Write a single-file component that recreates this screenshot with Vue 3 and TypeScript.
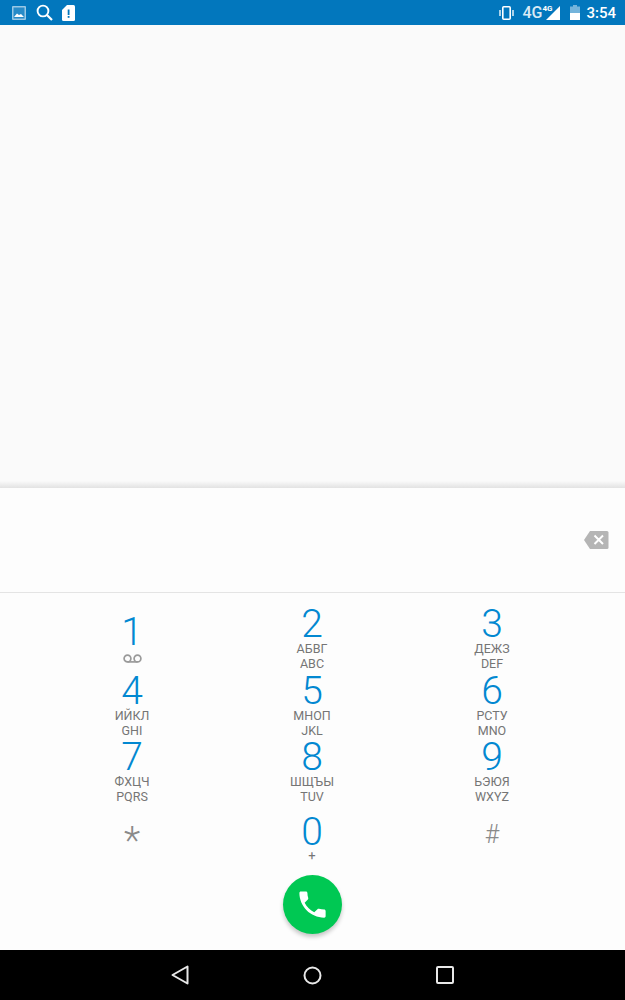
<script setup lang="ts">
interface DialKey {
  digit: string
  labels?: string[]
  symbol?: 'star' | 'hash'
  sub?: 'voicemail' | 'plus'
}

const keys: DialKey[] = [
  { digit: '1', sub: 'voicemail' },
  { digit: '2', labels: ['АБВГ', 'ABC'] },
  { digit: '3', labels: ['ДЕЖЗ', 'DEF'] },
  { digit: '4', labels: ['ИЙКЛ', 'GHI'] },
  { digit: '5', labels: ['МНОП', 'JKL'] },
  { digit: '6', labels: ['РСТУ', 'MNO'] },
  { digit: '7', labels: ['ФХЦЧ', 'PQRS'] },
  { digit: '8', labels: ['ШЩЪЫ', 'TUV'] },
  { digit: '9', labels: ['ЬЭЮЯ', 'WXYZ'] },
  { digit: '*', symbol: 'star' },
  { digit: '0', sub: 'plus' },
  { digit: '#', symbol: 'hash' },
]
</script>

<template>
  <div class="phone">
    <header class="status-bar">
      <div class="status-left">
        <svg class="pic" width="14" height="14" viewBox="0 0 14 14">
          <rect width="14" height="14" rx="1" fill="#fff" opacity="0.6" />
          <rect x="1.5" y="1.5" width="11" height="11" fill="#0277bd" opacity="0.75" />
          <path d="M2 11 L5 7.5 L7 9 L9 8 L12 11 Z" fill="#fff" />
        </svg>
        <svg width="17" height="17" viewBox="0 0 17 17">
          <circle cx="7" cy="7" r="5.4" fill="none" stroke="#fff" stroke-width="1.9" />
          <path d="M11 11 L16 16" stroke="#fff" stroke-width="2.2" />
        </svg>
        <svg class="sim" width="13" height="16" viewBox="0 0 13 16">
          <path d="M5 0 H11.5 A1.5 1.5 0 0 1 13 1.5 V14.5 A1.5 1.5 0 0 1 11.5 16 H1.5 A1.5 1.5 0 0 1 0 14.5 V5 Z" fill="#fff" />
          <rect x="5.7" y="4.5" width="1.8" height="5.5" fill="#0277bd" />
          <rect x="5.7" y="11" width="1.8" height="1.8" fill="#0277bd" />
        </svg>
      </div>
      <div class="status-right">
        <svg width="15" height="14" viewBox="0 0 15 14">
          <rect x="3.8" y="0.8" width="7.4" height="12.4" rx="1" fill="none" stroke="#fff" stroke-width="1.6" />
          <path d="M1 4 V10" stroke="#fff" stroke-width="1.8" opacity="0.75" />
          <path d="M14 4 V10" stroke="#fff" stroke-width="1.8" opacity="0.75" />
        </svg>
        <span class="net">4G</span>
        <div class="signal">
          <span class="net-small">4G</span>
          <svg width="15" height="14" viewBox="0 0 15 14">
            <path d="M14 0 V14 H0 Z" fill="#fff" />
          </svg>
        </div>
        <svg class="battery" width="10" height="15" viewBox="0 0 10 15">
          <path d="M3 0 H7 V1.5 H10 V15 H0 V1.5 H3 Z" fill="#fff" opacity="0.45" />
          <rect y="8" width="10" height="7" fill="#fff" />
        </svg>
        <span class="time">3:54</span>
      </div>
    </header>

    <main class="content"></main>

    <section class="number-field">
      <svg class="backspace" width="26" height="20" viewBox="0 0 26 20">
        <path d="M7 1 H24 A1.5 1.5 0 0 1 25.5 2.5 V17.5 A1.5 1.5 0 0 1 24 19 H7 L1 10 Z" fill="#b5b5b5" />
        <path d="M11.5 5.5 L20 14 M20 5.5 L11.5 14" stroke="#fff" stroke-width="2" />
      </svg>
    </section>

    <section class="dialpad">
      <div class="keys">
        <div v-for="key in keys" :key="key.digit" class="key">
          <div class="digit" :class="key.symbol">{{ key.digit }}</div>
          <template v-if="key.labels">
            <div v-for="label in key.labels" :key="label" class="label">{{ label }}</div>
          </template>
          <svg v-if="key.sub === 'voicemail'" class="voicemail" width="19" height="9" viewBox="0 0 19 9">
            <circle cx="4.5" cy="4.5" r="3.4" fill="none" stroke="#9a9a9a" stroke-width="1.7" />
            <circle cx="14.5" cy="4.5" r="3.4" fill="none" stroke="#9a9a9a" stroke-width="1.7" />
            <path d="M4.5 7.9 H14.5" stroke="#9a9a9a" stroke-width="1.7" />
          </svg>
          <div v-if="key.sub === 'plus'" class="plus">+</div>
        </div>
      </div>
      <button class="call">
        <svg width="35" height="35" viewBox="0 0 24 24">
          <path fill="#fff" d="M6.62 10.79c1.44 2.83 3.76 5.14 6.59 6.59l2.2-2.2c.27-.27.67-.36 1.02-.24 1.12.37 2.33.57 3.57.57.55 0 1 .45 1 1V20c0 .55-.45 1-1 1-9.39 0-17-7.61-17-17 0-.55.45-1 1-1h3.5c.55 0 1 .45 1 1 0 1.25.2 2.45.57 3.57.11.35.03.74-.25 1.02l-2.2 2.2z" />
        </svg>
      </button>
    </section>

    <nav class="nav-bar">
      <svg width="18" height="20" viewBox="0 0 18 20">
        <path d="M16.5 1.5 V18.5 L1.5 10 Z" fill="none" stroke="#e8e8e8" stroke-width="2" stroke-linejoin="round" />
      </svg>
      <svg width="19" height="19" viewBox="0 0 19 19">
        <circle cx="9.5" cy="9.5" r="8" fill="none" stroke="#e8e8e8" stroke-width="2" />
      </svg>
      <svg width="18" height="18" viewBox="0 0 18 18">
        <rect x="1" y="1" width="16" height="16" rx="1" fill="none" stroke="#e8e8e8" stroke-width="2" />
      </svg>
    </nav>
  </div>
</template>

<style>
body {
  background: #fafafa;
}
</style>

<style scoped>
.phone {
  display: flex;
  flex-direction: column;
  width: 625px;
  height: 1000px;
  overflow: hidden;
  font-family: Roboto, "Liberation Sans", sans-serif;
}

.status-bar {
  display: flex;
  justify-content: space-between;
  align-items: center;
  height: 25px;
  padding: 0 9px 0 12px;
  background: #0277bd;
  color: #fff;
  flex-shrink: 0;
}

.status-left {
  display: flex;
  align-items: center;
  gap: 10px;
}

.sim {
  margin-left: -1px;
}

.status-right {
  display: flex;
  align-items: center;
}

.net {
  margin-left: 8px;
  font-size: 16px;
  font-weight: 500;
  opacity: 0.85;
}

.signal {
  position: relative;
  display: flex;
  margin-left: 4px;
}

.net-small {
  position: absolute;
  top: -2px;
  left: -4px;
  font-size: 8px;
  font-weight: 700;
}

.battery {
  margin-left: 9px;
}

.time {
  margin-left: 6px;
  font-size: 15px;
  font-weight: 500;
}

.content {
  height: 463px;
  flex-shrink: 0;
  background: linear-gradient(to bottom, #fafafa 0, #fafafa 456px, #e2e2e2 463px);
}

.number-field {
  display: flex;
  align-items: center;
  justify-content: flex-end;
  height: 105px;
  padding: 0 16px 0 0;
  background: #fdfdfd;
  border-bottom: 1px solid #e4e4e4;
  flex-shrink: 0;
  box-sizing: border-box;
}

.dialpad {
  display: flex;
  flex-direction: column;
  flex: 1;
  align-items: center;
  background: #fdfdfd;
  padding-top: 13px;
}

.keys {
  display: grid;
  grid-template-columns: repeat(3, 180px);
  grid-auto-rows: 66.5px;
  width: 540px;
  margin-left: -1px;
}

.key {
  display: flex;
  flex-direction: column;
  align-items: center;
  justify-content: center;
  padding-bottom: 1px;
  box-sizing: border-box;
}

.digit {
  height: 35px;
  line-height: 36px;
  font-size: 39px;
  font-weight: 300;
  color: #0288d1;
}

.digit.star {
  height: 20px;
  line-height: 32px;
  margin-bottom: 7px;
  font-size: 38px;
  color: #8a8a8a;
}

.digit.hash {
  height: 24px;
  line-height: 24px;
  margin-bottom: 7px;
  font-size: 25px;
  color: #8a8a8a;
}

.label {
  height: 15px;
  line-height: 15px;
  font-size: 12.5px;
  color: #757575;
}

.voicemail {
  margin-top: 5px;
}

.plus {
  height: 14px;
  line-height: 14px;
  font-size: 13px;
  color: #757575;
}

.call {
  display: flex;
  align-items: center;
  justify-content: center;
  width: 59px;
  height: 59px;
  margin-top: 3px;
  margin-left: -1px;
  padding: 0;
  border: none;
  border-radius: 50%;
  background: #00c853;
  box-shadow: 0 3px 4px rgba(0, 0, 0, 0.22);
}

.nav-bar {
  display: flex;
  align-items: center;
  justify-content: center;
  gap: 114px;
  height: 50px;
  background: #000;
  flex-shrink: 0;
}
</style>
